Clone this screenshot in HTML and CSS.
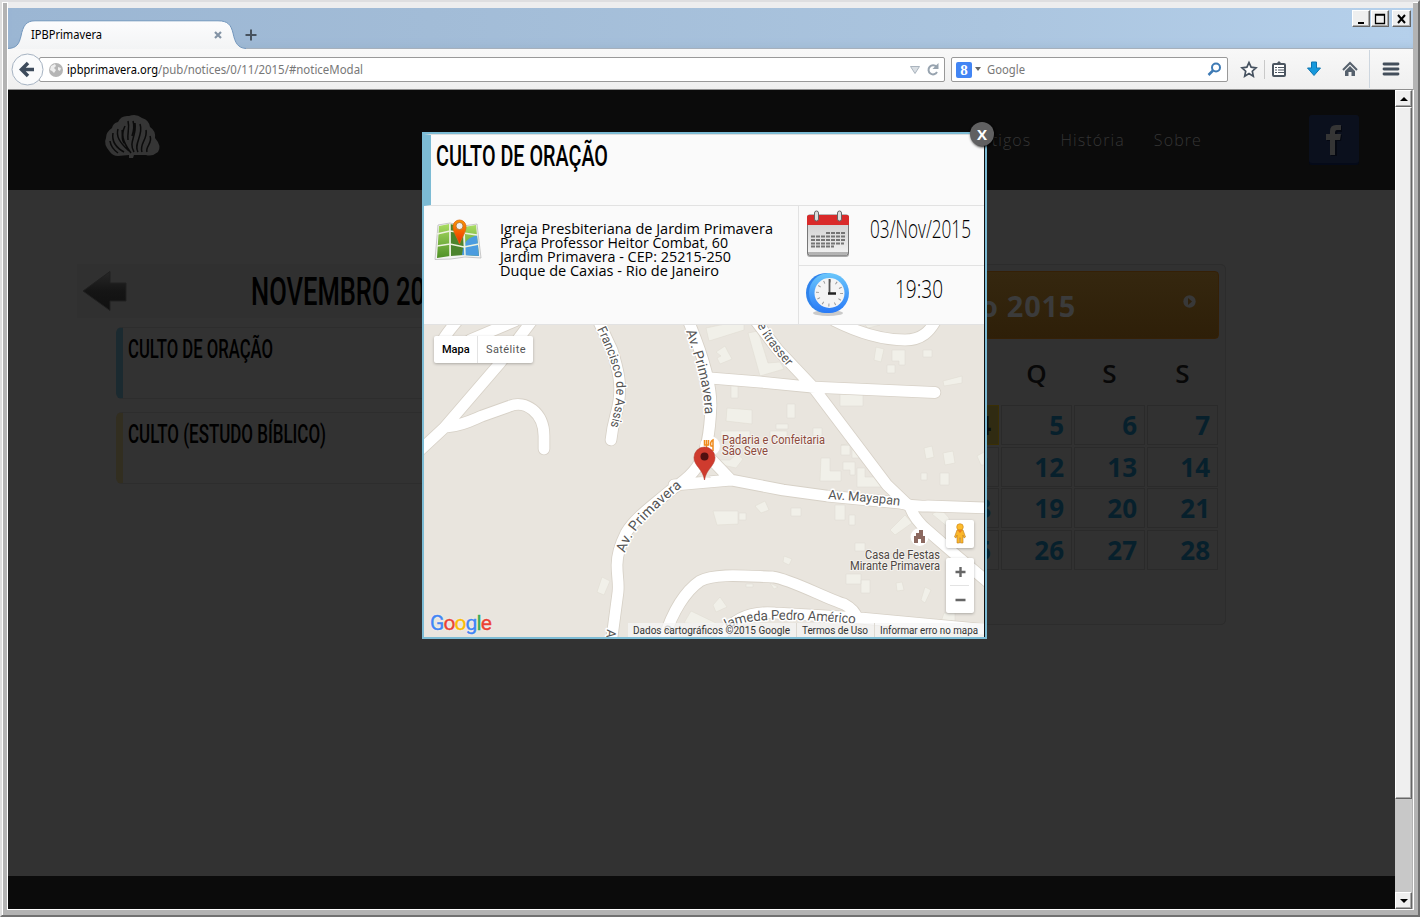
FILE: index.html
```html
<!DOCTYPE html>
<html lang="pt-BR">
<head>
<meta charset="utf-8">
<title>IPBPrimavera</title>
<link rel="stylesheet" href="styles.css">
</head>
<body>
<div class="window">
  <div class="titlebar">
    <div class="tabs">
      <div class="tab">
        <svg class="tab-shape" width="238" height="29" viewBox="0 0 238 29"><defs><linearGradient id="tabg" x1="0" y1="0" x2="0" y2="1"><stop offset="0" stop-color="#fcfcfd"/><stop offset="1" stop-color="#f3f4f5"/></linearGradient></defs><path d="M0 28.5C9 28 11 24 13 16C15 6 18 .8 27 .8H210C220 .8 223 5 225 13C227 23 230 28 238 28.5V29H0Z" fill="url(#tabg)"/><path d="M0 28.5C9 28 11 24 13 16C15 6 18 .8 27 .8H210C220 .8 223 5 225 13C227 23 230 28 238 28.5" fill="none" stroke="#7397bd"/></svg>
        <svg class="tab-label" width="72" height="16"><text x="0" y="12" font-size="12" textLength="71" lengthAdjust="spacingAndGlyphs">IPBPrimavera</text></svg>
        <svg class="tab-close" width="8" height="8"><path d="M1 1L7 7M7 1L1 7" stroke="#8393a5" stroke-width="2.2"/></svg>
      </div>
      <svg class="newtab" width="12" height="12"><path d="M6 .5V11.500M.5 6H11.500" stroke="#47525e" stroke-width="2"/></svg>
    </div>
    <div class="winbtns">
      <svg class="wbtn" width="18" height="17"><path d="M5 12H11" stroke="#000" stroke-width="2"/></svg>
      <svg class="wbtn" width="18" height="17"><path d="M3.500 3.500H12.500V12.500H3.500ZM3 4H13" fill="none" stroke="#000" stroke-width="1.300"/></svg>
      <svg class="wbtn last" width="19" height="17"><path d="M5 4L12 12M12 4L5 12" stroke="#000" stroke-width="2"/></svg>
    </div>
  </div>
  <div class="toolbar">
    <div class="urlbar">
      <svg width="14" height="14" viewBox="0 0 14 14"><circle cx="7" cy="7" r="7" fill="#b5b5b5"/><path d="M2 3L6 1L7 3L5 5L7 7L5 10L3 8L1 7Z M9 4L12 5L11 8L9 7Z" fill="#eee"/></svg>
      <svg class="urltext" width="300" height="18"><text y="13" font-size="12.500" fill="#000" textLength="91" lengthAdjust="spacingAndGlyphs">ipbprimavera.org</text><text x="91" y="13" font-size="12.500" fill="#777" textLength="205" lengthAdjust="spacingAndGlyphs">/pub/notices/0/11/2015/#noticeModal</text></svg>
      <svg class="urlend" width="30" height="14"><path d="M.5 3.500H9.500L5 10.500Z" fill="#d9dee3" stroke="#aab4be"/><path d="M26.500 4A4.500 4.500 0 1 0 27 9" fill="none" stroke="#97a3af" stroke-width="2"/><path d="M28.500 0V6H22.500Z" fill="#97a3af"/></svg>
    </div>
    <svg class="back" width="33" height="33" viewBox="0 0 33 33"><circle cx="16.500" cy="16.500" r="15.500" fill="#fafbfc" stroke="#a6b3c2"/><path d="M23 16.500H12M17 10L10.500 16.500L17 23" fill="none" stroke="#3d4b5c" stroke-width="3.500"/></svg>
    <div class="search">
      <span class="gicon">8</span>
      <svg width="7" height="5"><path d="M0 0H6L3 4Z" fill="#666"/></svg>
      <svg class="gtext" width="40" height="18"><text y="13" font-size="12" fill="#777" textLength="38" lengthAdjust="spacingAndGlyphs">Google</text></svg>
      <svg class="lens" width="15" height="15"><circle cx="9" cy="5.500" r="4" fill="none" stroke="#3d7ab5" stroke-width="2"/><path d="M6 8.500L1.500 13" stroke="#3d7ab5" stroke-width="2.500"/></svg>
    </div>
    <div class="tools">
      <svg width="16" height="17" viewBox="0 0 16 17"><path d="M8 1.500L10.100 6.200L15 6.800L11.300 10.200L12.300 15.200L8 12.600L3.700 15.200L4.700 10.200L1 6.800L5.900 6.200Z" fill="#fff" stroke="#465260" stroke-width="1.700"/></svg>
      <i class="sep s1"></i>
      <svg width="14" height="16" viewBox="0 0 14 16"><rect x="1" y="3" width="12" height="12" rx="1" fill="#fff" stroke="#4b5560" stroke-width="2"/><path d="M4 3L7 0L10 3Z" fill="#4b5560"/><path d="M3 6.500H5M6 6.500H12M3 9H5M6 9H12M3 11.500H5M6 11.500H12" stroke="#4b5560" stroke-width="1.200"/></svg>
      <svg class="down" width="14" height="16" viewBox="0 0 14 16"><path d="M4.500 1H9.500V7H13.500L7 14.500L.5 7H4.500Z" fill="#1698dc" stroke="#0e76b1"/></svg>
      <svg class="home" width="16" height="16" viewBox="0 0 16 16"><path d="M1 9L8 2L15 9" fill="none" stroke="#56616d" stroke-width="2"/><path d="M3 10L8 5L13 10V15H9.500V11H6.500V15H3Z" fill="#56616d"/></svg>
      <i class="sep s2"></i>
      <svg width="16" height="14"><path d="M1 2H15M1 7H15M1 12H15" stroke="#434e5b" stroke-width="2.800" stroke-linecap="round"/></svg>
    </div>
  </div>
  <div class="viewport">
    <div class="page">
      <header class="site">
        <svg class="logo" width="56" height="45" viewBox="0 0 56 45"><path d="M25 44V41L14 42Q9 42 6 38Q-1 30 2 24Q2 18 8 14Q9 9 14 8Q17 1 25 2Q32-1 38 4Q45 6 46 13Q52 17 51 24Q58 32 54 38Q48 43 42 41L30 41L29 44Z" fill="#353535"/><path d="M27 39C18 27 17 20 21 12M25 37C15 28 12 22 14 15M20 38C9 32 8 25 9 19M14 39Q7 34 6 27M24 26C23 19 26 14 24 7M30 38C24 28 33 22 31 9M34 38C29 30 40 21 36 10M38 38C35 30 44 25 42 16M43 38C41 33 49 29 46 22M28 22Q31 13 29 7M20 29C17 25 19 20 18 16" fill="none" stroke="#0b0b0b" stroke-width="1.500"/></svg>
        <nav><span>Artigos</span><span>História</span><span>Sobre</span></nav>
        <svg class="fb" width="50" height="50"><rect y="1" width="50" height="49" rx="3" fill="#050a19"/><rect width="50" height="48" rx="3" fill="#0b101d"/><path d="M22 41V26H18V20H22V17Q22 11 28 11H33V17H29Q28 17 28 19V20H33L32 26H28V41Z" fill="#050811"/><path d="M21 40V25H17V19H21V16Q21 10 27 10H32V15H28Q26 15 26 18V19H32L31 25H26V40Z" fill="#353535"/></svg>
      </header>
      <main>
        <section class="events">
          <div class="month">
            <svg width="46" height="42" viewBox="0 0 46 42"><defs><linearGradient id="ar" x1="0" y1="0" x2="0" y2="1"><stop offset="0" stop-color="#272727"/><stop offset=".5" stop-color="#151515"/><stop offset="1" stop-color="#101010"/></linearGradient></defs><path d="M1 21L28 1.500V13H44V31H28V40.500Z" fill="url(#ar)" stroke="#202020"/></svg>
            <svg class="month-name" width="210" height="42"><text y="35" font-size="39" font-weight="500" textLength="203" lengthAdjust="spacingAndGlyphs">NOVEMBRO 2015</text></svg>
          </div>
          <div class="event blue"><svg width="210" height="42"><text y="30" font-size="26" font-weight="500" textLength="145" lengthAdjust="spacingAndGlyphs">CULTO DE ORAÇÃO</text></svg></div>
          <div class="event yellow"><svg width="210" height="42"><text y="30" font-size="26" font-weight="500" textLength="198" lengthAdjust="spacingAndGlyphs">CULTO (ESTUDO BÍBLICO)</text></svg></div>
        </section>
        <aside class="calendar">
          <div class="cal-head"><span>Novembro 2015</span><svg width="13" height="13"><circle cx="6.500" cy="6.500" r="6.200" fill="#383838"/><path d="M5 3L9 6.500L5 10Z" fill="#2f210c"/></svg></div>
          <div class="cal-days"><i></i><b>Q</b><b>S</b><b>S</b></div>
          <div class="cal-grid">
            <span class="today">4</span><span>5</span><span>6</span><span>7</span>
            <span>11</span><span>12</span><span>13</span><span>14</span>
            <span>18</span><span>19</span><span>20</span><span>21</span>
            <span>25</span><span>26</span><span>27</span><span>28</span>
          </div>
        </aside>
      </main>
      <footer></footer>
      <div class="modal">
        <div class="modal-title"><svg width="200" height="50"><text y="31" font-size="29.500" font-weight="500" textLength="172" lengthAdjust="spacingAndGlyphs">CULTO DE ORAÇÃO</text></svg></div>
        <div class="info">
          <div class="place">
            <svg width="48" height="44" viewBox="0 0 48 44"><defs><linearGradient id="gr" x1="0" y1="0" x2="0" y2="1"><stop offset="0" stop-color="#a9dc62"/><stop offset="1" stop-color="#4f9126"/></linearGradient><linearGradient id="pn" x1="0" y1="0" x2="0" y2="1"><stop offset="0" stop-color="#ff9500"/><stop offset="1" stop-color="#ee2c00"/></linearGradient></defs><path d="M1 41.500L4 7L16 5L29 8L43 6L47 40L31 39L17 41Z" fill="#f4f4f4" stroke="#bbb" stroke-width=".8"/><path d="M5 8L15 6L16 38L3 40Z" fill="url(#gr)"/><path d="M16 6L29 9L30 37L17 38Z" fill="#4c842d"/><path d="M30 9L42 7L45 38L31 37Z" fill="url(#gr)"/><path d="M28 37Q29 24 36 20L43 17L45 38Z" fill="#4b9cdf"/><path d="M3 28L16 26L30 29L45 26M16 6V39M30 9L31 38M3 16L16 13L43 17" stroke="#edf2df" stroke-width="1.500" fill="none"/><path d="M25.500 26C22 17 19 14 19 8.500A6.500 6.500 0 0 1 32 8.500C32 14 29 17 25.500 26Z" fill="url(#pn)" stroke="#d46a12" stroke-width=".8"/><circle cx="25.500" cy="8" r="3.600" fill="#eee" stroke="#b9772b"/></svg>
            <svg class="address" width="290" height="64"><g font-size="14.500"><text y="13" textLength="273" lengthAdjust="spacingAndGlyphs">Igreja Presbiteriana de Jardim Primavera</text><text y="27" textLength="228" lengthAdjust="spacingAndGlyphs">Praça Professor Heitor Combat, 60</text><text y="41" textLength="231" lengthAdjust="spacingAndGlyphs">Jardim Primavera - CEP: 25215-250</text><text y="55" textLength="219" lengthAdjust="spacingAndGlyphs">Duque de Caxias - Rio de Janeiro</text></g></svg>
          </div>
          <div class="when">
            <div class="cell">
              <svg width="44" height="48" viewBox="0 0 44 48"><defs><linearGradient id="cg" x1="0" y1="0" x2="0" y2="1"><stop offset="0" stop-color="#c9c9c9"/><stop offset="1" stop-color="#f3f3f3"/></linearGradient></defs><rect x="1" y="38" width="42" height="9" rx="3" fill="#aaa"/><rect x="1.500" y="5" width="41" height="40" rx="2" fill="url(#cg)" stroke="#777"/><path d="M1 15V7Q1 5 3 5H41Q43 5 43 7V15Z" fill="#d92a2a"/><path d="M20 23H39M5 26.500H39M5 30H39M5 33.500H38M5 36.500H28" stroke="#757575" stroke-width="2.200" stroke-dasharray="4 1"/><path d="M2 43H42" stroke="#777"/><g fill="#ddd" stroke="#666"><rect x="8.500" y="1" width="4" height="10" rx="2"/><rect x="31.500" y="1" width="4" height="10" rx="2"/></g></svg>
              <svg class="date" width="104" height="32"><text y="24" font-size="26" font-weight="300" textLength="101" lengthAdjust="spacingAndGlyphs">03/Nov/2015</text></svg>
            </div>
            <div class="cell">
              <svg width="44" height="46" viewBox="0 0 44 46"><defs><linearGradient id="cl" x1="0" y1="0" x2="0" y2="1"><stop offset="0" stop-color="#6bc7fb"/><stop offset="1" stop-color="#2879f7"/></linearGradient></defs><ellipse cx="22" cy="42" rx="15" ry="3" fill="#aaa" opacity=".6"/><circle cx="20" cy="22" r="20" fill="#2f83ec"/><circle cx="23" cy="22" r="20" fill="url(#cl)"/><circle cx="23.500" cy="22" r="15" fill="#f4f4f4"/><circle cx="23.500" cy="22" r="12" fill="none" stroke="#999" stroke-width="3" stroke-dasharray="1 5.283"/><path d="M23.500 8V23" stroke="#555" stroke-width="1.800"/><path d="M22 22.500H30" stroke="#222" stroke-width="2.500"/></svg>
              <svg class="time" width="50" height="32"><text y="24" font-size="26" font-weight="300" textLength="48" lengthAdjust="spacingAndGlyphs">19:30</text></svg>
            </div>
          </div>
        </div>
        <div class="map">
          <svg width="560" height="312" viewBox="424 325 560 312">
            <defs>
              <g id="roads" fill="none" stroke-linecap="round" stroke-linejoin="round">
                <path d="M416 454L444 428L500 363L531 322M446 427C460 426 470 421 482 416L510 406C525 400 544 412 544 436V449M444 338Q450 329 458 320M470 340L515 321"/>
                <path d="M598 320L612 350C619 372 621 385 619 400C617 415 613 420 611 440"/>
                <path d="M688 320C705 360 711 385 711 405C710 432 707 453 697 467C688 480 680 483 670 491C651 507 635 518 626 533C620 545 617 555 617 565C617 577 619 582 618 592L611 645M710 458L731 480M674 485L731 480L783 490L827 496L900 503Q914 507 928 506L990 508"/>
                <path d="M755 320L778 350L813 387L887 485L910 507Q915 520 927 530L957 556L990 584M710 378L760 382L810 387L935 392.500"/>
                <path d="M835 321C855 331 880 340 905 340C922 340 930 331 936 320M662 645C672 610 687 590 700 581C715 573 745 576 773 577C790 579 825 598 844 604Q855 610 857 618M722 635Q740 610 775 613L860 618L990 630"/>
              </g>
              <path id="p1" d="M597 329C606 348 619 378 616 393C616 408 613 415 610 430"/>
              <path id="p2" d="M686 331C696 363 704 382 705 417"/>
              <path id="p3" d="M625 553C631 529 656 509 684 485"/>
              <path id="p4" d="M828 499Q865 501 902 506"/>
              <path id="p5" d="M757 325C765 341 775 352 790 370"/>
              <path id="p6" d="M727 629C750 617 785 618 860 624"/>
            </defs>
            <rect x="424" y="325" width="560" height="312" fill="#e9e5de"/>
            <g fill="#f1f0e9" stroke="#dedbd1" stroke-width=".5">
              <path d="M706 328L744 320V330L709 341ZM716 352L725 346L728 352L732 359L720 364L717 358L721 356ZM748 333L758 331L768 363L780 362L784 369L760 376ZM731 386H738V398H731ZM727 408L752 410V424L726 421ZM787 404H795V418H787ZM776 424H788V429H776ZM721 431H750V440H721ZM770 431H787V437H770ZM813 428H822V436H813ZM840 394H863V406H840ZM876 347L884 349L881 362L874 360ZM892 350H905V365H899V361H892ZM887 365H895V373H887ZM923 350H932V357H923ZM943 381L962 376V383L944 386Z"/>
              <path d="M841 445L847 444H850V445ZM821 458H830V471H841V481H820ZM843 462H855V475H850V470H843ZM857 468H865V477H886V487H857ZM841 445H850V455H841ZM852 449H859V458H852ZM924 448L932 446L934 457L926 459ZM943 453L953 451L955 463L945 465ZM977 456L984 452V465H981ZM921 473H927V480H921ZM940 473H949V485H940ZM713 511H738V524L717 525ZM739 513H746V520H739ZM755 506L765 501L769 510L761 513ZM791 508H801V516H791ZM835 505H845V520H835ZM849 515H855V525H849ZM890 530L905 515L912 523L895 535ZM932 514L941 509L949 518V528ZM855 543H865V551H855ZM784 556L792 559L789 565L783 562ZM846 574H861V584H846ZM861 580H870V593H861ZM896 583L902 582L904 590L897 591ZM925 587L931 590L925 603L921 600ZM713 605L720 597L727 607L716 612ZM746 584H753V587H746ZM770 583L778 587L774 589ZM602 577L610 581L604 595L597 592ZM691 611L720 625L684 623ZM944 613L955 613V627L941 622ZM705 461L710 460L730 460L737 454L743 459L736 468ZM865 325H880L868 328Z"/>
            </g>
            <use href="#roads" stroke="#d7d1c7" stroke-width="12.500"/>
            <use href="#roads" stroke="#fff" stroke-width="10.800"/>
            <path d="M700 477L707 472L711 478Z" fill="#e9e5de"/>
            <g class="street">
              <text font-size="13"><textPath href="#p1" textLength="102" lengthAdjust="spacingAndGlyphs">Francisco de Assis</textPath></text>
              <text font-size="14"><textPath href="#p2" textLength="86">Av. Primavera</textPath></text>
              <text font-size="14"><textPath href="#p3" textLength="89">Av. Primavera</textPath></text>
              <text font-size="13"><textPath href="#p4" textLength="72">Av. Mayapan</textPath></text>
              <text font-size="13"><textPath href="#p5" textLength="52">e Itrasser</textPath></text>
              <text font-size="13.500"><textPath href="#p6" textLength="130">lameda Pedro Américo</textPath></text>
              <text transform="translate(607 629) rotate(95)" font-size="13">A</text>
              <text transform="translate(669 633) rotate(-60)" font-size="12">o</text>
            </g>
            <circle cx="710" cy="446" r="10" fill="#fff"/><path d="M706.500 440V451M704.500 440V445H708.500V440M713 451V440Q709.500 442 711 446H713" fill="none" stroke="#f08b1d" stroke-width="1.500"/>
            <g class="poi"><g fill="#8d4a3c"><text x="722" y="444" textLength="103" lengthAdjust="spacingAndGlyphs">Padaria e Confeitaria</text><text x="722" y="455" textLength="46" lengthAdjust="spacingAndGlyphs">São Seve</text></g><g fill="#4e4743"><text x="865" y="559" textLength="75" lengthAdjust="spacingAndGlyphs">Casa de Festas</text><text x="850" y="570" textLength="90" lengthAdjust="spacingAndGlyphs">Mirante Primavera</text></g></g>
            <circle cx="919.500" cy="537" r="9" fill="#fff"/><path d="M914 543V536H916V533H919V530H923V533H920V533H923V536H925V543H921V539H918V543Z" fill="#8c6960"/>
            <path d="M704.500 480C703 469 694 466 694 457.500A10.500 10.500 0 0 1 715 457.500C715 466 706 469 704.500 480Z" fill="#cf3b2e" stroke="#b3352a" stroke-width=".6"/><circle cx="704.500" cy="456.500" r="4" fill="#511010"/>
          </svg>
          <div class="maptype"><b>Mapa</b><span>Satélite</span></div>
          <div class="google"><i>G</i><i>o</i><i>o</i><i>g</i><i>l</i><i>e</i></div>
          <div class="controls">
            <div class="ctl"><svg width="12" height="22" viewBox="0 0 12 22"><circle cx="6" cy="4" r="3.300" fill="#fdbb2c" stroke="#c78013" stroke-width=".6"/><path d="M3 7H9L11.500 14L10 15L9 12V20H6.500V15H5.500V20H3V12L2 15L.5 14Z" fill="#fbb72a" stroke="#bf7d1c" stroke-width=".6"/><path d="M3.500 7.300H8.500L6 10Z" fill="#ed7d1b"/></svg></div>
            <div class="ctl zoom"><svg width="28" height="55"><path d="M9.500 14H19.500M14.500 9V19M9.500 42H19.500" stroke="#666" stroke-width="2.400"/><path d="M4 27.500H23" stroke="#e3e3e3"/></svg></div>
          </div>
          <div class="credits"><svg width="356" height="14"><g font-size="10" font-family="Roboto" fill="#333"><text x="5" y="11" textLength="157">Dados cartográficos ©2015 Google</text><text x="174" y="11" textLength="66">Termos de Uso</text><text x="252" y="11" textLength="98" lengthAdjust="spacingAndGlyphs">Informar erro no mapa</text></g><path d="M168.500 0V14M246.500 0V14" stroke="#ddd9d2"/></svg></div>
        </div>
        <div class="close">X</div>
      </div>
    </div>
    <div class="scrollbar">
      <div class="sb"><svg width="8" height="4"><path d="M0 4L4 0L8 4Z"/></svg></div>
      <div class="thumb"></div>
      <div class="sb end"><svg width="8" height="4"><path d="M0 0L4 4L8 0Z"/></svg></div>
    </div>
  </div>
</div>
</body>
</html>
```
FILE: styles.css
```css
* { box-sizing: border-box; }
body { margin: 0; width: 1420px; height: 917px; overflow: hidden; background: #b3b3b3; font-family: "Open Sans", "Noto Sans", sans-serif; }
svg { display: block; flex: none; overflow: visible; }
i { font-style: normal; }

.window { width: 1420px; height: 917px; padding: 8px 8px 7px; border-style: solid; border-width: 2px; border-color: #dedee0 #717171 #717171 #dedede; padding: 0 5px 5px; display: flex; flex-direction: column; box-shadow: inset 1px 1px #fff; }
.titlebar { margin: 0 0 0 1px; height: 46px; border-top: 6px solid #ededee; display: flex; justify-content: space-between; background: linear-gradient(90deg, #9bb6d3, #a2bcd7 30%, #abc5df 70%, #b5d0eb); border-bottom: 0; }
.titlebar { box-shadow: -1px 0 #fff, inset 0 -6px 7px -4px #8fa8c055; }
.tabs { display: flex; padding-top: 12px; }
.tab { width: 238px; height: 29px; position: relative; display: flex; align-items: center; }
.tab-shape { position: absolute; left: 0; top: 0; }
.tab-label { position: relative; margin-left: 23px; font-family: "Noto Sans"; }
.tab-close { position: relative; margin-left: 111px; }
.newtab { margin: 9px 0 0 -1px; }
.winbtns { display: flex; padding: 2px 2px 0 0; }
.wbtn { background: #efefef; border: 1px solid; border-color: #fff #666 #666 #fff; box-shadow: inset -1px -1px #aaa; margin-right: 1px; }
.wbtn.last { margin: 0 0 0 2px; }

.toolbar { margin-left: 1px; height: 42px; flex: none; background: linear-gradient(#f8f8f8, #efefef); border-top: 1px solid #a6b0bb; border-bottom: 1px solid #8e8e8e; display: flex; align-items: center; padding-left: 31px; box-shadow: -1px 0 #fff; }
.urlbar { width: 906px; height: 25px; border: 1px solid #999; border-radius: 2px; background: #fff; display: flex; align-items: center; padding-left: 9px; margin-top: 1px; }
.urltext { margin-left: 4px; font-family: "Noto Sans"; }
.urlend { margin-left: auto; margin-right: 4px; }
.back { margin-left: -934px; margin-right: 907px; margin-top: 1px; position: relative; }
.search { width: 277px; height: 25px; border: 1px solid #999; border-radius: 2px; background: #fff; display: flex; align-items: center; padding: 0 5px 0 4px; margin-top: 1px; }
.gicon { width: 16px; height: 16px; border-radius: 2px; background: #4285f4; color: #fff; font: bold 15px/16px "Liberation Serif", serif; text-align: center; margin-right: 3px; }
.gtext { margin-left: 5px; font-family: "Noto Sans"; }
.lens { margin-left: auto; }
.tools { display: flex; align-items: center; padding-left: 13px; height: 40px; }
.sep { width: 1px; background: #c9c9c9; }
.s1 { height: 19px; margin: 0 7px; }
.s2 { height: 38px; background: #cdd6df; margin: 0 13px 0 11px; }
.down { margin: 0 21px 0 21px; }

.viewport { margin-left: 1px; height: 820px; flex: none; display: flex; border-bottom: 1px solid #fff; box-shadow: -1px 0 #fff, 1px 0 #fff; }
.page { width: 1387px; height: 819px; background: #323232; display: flex; flex-direction: column; position: relative; overflow: hidden; }
.site { height: 100px; flex: none; background: #0b0b0b; display: flex; align-items: center; padding: 0 36px 0 96px; }
.logo { margin-top: -8px; }
nav { margin-left: auto; margin-right: 107px; display: flex; gap: 29px; color: #353535; font-size: 16px; font-weight: 300; letter-spacing: 1.1px; }
main { flex: 1; display: flex; padding: 74px 0 0 69px; }
.events { width: 700px; color: #131313; font-family: Roboto; }
.month { height: 54px; background: #303030; display: flex; align-items: center; padding-left: 5px; margin-bottom: 9px; }
.month-name { margin-left: 123px; }
.event { width: 500px; height: 72px; margin: 0 0 13px 39px; border: 1px solid #2d2d2d; border-left: 7px solid #1b2a30; border-radius: 6px 0 0 6px; padding-left: 5px; }
.event.yellow { border-left-color: #322e20; }
.calendar { width: 316px; height: 361px; margin-left: 133px; border: 1px solid #2c2c2c; border-radius: 5px; padding: 6px; background: #313131; }
.cal-head { height: 68px; border: 1px solid #352006; border-radius: 4px; background: linear-gradient(#35270f, #2e1f08); display: flex; justify-content: space-between; color: #3b3b3b; font: bold 29px/67px "Open Sans"; padding: 0 22px 0 0; }
.cal-head span { width: 158px; direction: rtl; white-space: nowrap; letter-spacing: .7px; }
.cal-head svg { margin-top: 23px; }
.cal-days, .cal-grid { display: grid; grid-template-columns: repeat(4, 71px); column-gap: 2px; padding-left: 11px; }
.cal-days { height: 66px; font-size: 26px; line-height: 68px; color: #080808; text-align: center; }
.cal-days b { font-weight: 600; }
.cal-grid { grid-auto-rows: 40px; row-gap: 1.700px; }
.cal-grid span { border: 1px solid #2a2a2a; color: #07202c; font: bold 26px/39px "Open Sans"; text-align: right; padding-right: 7px; }
.cal-grid .today { background: #302b12; border-color: #3a2f04; color: #0b0b0b; }
footer { height: 33px; background: #0b0b0b; }

.modal { position: absolute; left: 414px; top: 42px; width: 565px; height: 507px; border: 2px solid #7cbbd4; background: #fafafa; box-shadow: inset -1px 0 #111; color: #666; padding-right: 1px; }
.modal-title { height: 72px; width: 560px; border-left: 7px solid #7cbbd4; border-top: 1px solid #ddd; border-bottom: 1px solid #e2e2e2; padding-left: 5px; font-family: Roboto; }
.info { height: 119px; width: 560px; display: flex; border-bottom: 1px solid #e2e2e2; }
.place { width: 374px; display: flex; padding: 12px 0 0 10px; }
.address { margin: 3px 0 0 18px; }
.when { width: 186px; border-left: 1px solid #e2e2e2; font-family: "Open Sans"; }
.cell { height: 60px; border-bottom: 1px solid #e2e2e2; padding: 4px 0 0 7px; display: flex; }
.cell + .cell { border: 0; padding-top: 5px; }
.date { margin-left: 20px; margin-top: 4px; }
.time { margin: 3px 0 0 45px; }
.map { width: 560px; height: 312px; position: relative; overflow: hidden; font-family: Roboto; }
.street { fill: #555; stroke: #fff; stroke-width: 3px; paint-order: stroke; stroke-linejoin: round; }
.poi { font-size: 12px; stroke: #f5f3ef; stroke-width: 2px; paint-order: stroke; }
.maptype { position: absolute; left: 10px; top: 11px; width: 99px; height: 27px; display: flex; background: #fff; border-radius: 2px; box-shadow: 0 1px 3px #0004; font-size: 11px; line-height: 27px; color: #565656; }
.maptype b { width: 44px; padding-left: 8px; color: #000; font-weight: 500; border-right: 1px solid #e3e3e3; }
.maptype span { padding-left: 8px; letter-spacing: .4px; }
.google { position: absolute; left: 6px; top: 286px; font-size: 21px; line-height: 24px; letter-spacing: -.9px; -webkit-text-stroke: .4px; color: #4285f4; text-shadow: 0 0 2px #fff; }
.google i:nth-child(2), .google i:nth-child(6) { color: #ea4335; }
.google i:nth-child(3) { color: #fbbc05; }
.google i:nth-child(5) { color: #34a853; }
.controls { position: absolute; left: 522px; top: 195px; display: flex; flex-direction: column; gap: 10px; }
.ctl { width: 28px; height: 28px; background: #fff; border-radius: 2px; box-shadow: 0 1px 3px #0004; display: flex; align-items: center; justify-content: center; }
.ctl.zoom { height: 55px; }
.credits { position: absolute; left: 204px; top: 298px; background: #f5f5f5b8; }
.close { position: absolute; right: -9px; top: -12px; width: 24px; height: 24px; border-radius: 50%; background: #606061; color: #fff; font: bold 15px/24px "Open Sans"; text-align: center; box-shadow: 1px 1px 3px #000; }

.scrollbar { width: 17px; background: #c8c8c8; display: flex; flex-direction: column; }
.sb, .thumb { background: #efefef; border: 1px solid; border-color: #fff #666 #666 #fff; box-shadow: inset -1px -1px #aaa; }
.sb { height: 17px; display: flex; align-items: center; justify-content: center; }
.thumb { height: 692px; }
.end { margin-top: auto; }
```
